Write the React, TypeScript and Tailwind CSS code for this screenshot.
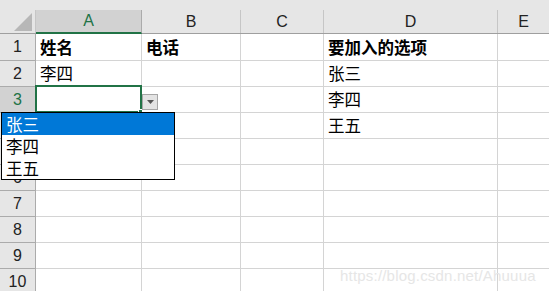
import React from 'react'

// column widths incl. right gridline
const cols = [
  { key: 'A', w: 'w-[106px]' },
  { key: 'B', w: 'w-[99px]' },
  { key: 'C', w: 'w-[83px]' },
  { key: 'D', w: 'w-[174px]' },
  { key: 'E', w: 'flex-1' },
]

const data: Record<number, Record<string, { text: string; bold?: boolean }>> = {
  1: { A: { text: '姓名', bold: true }, B: { text: '电话', bold: true }, D: { text: '要加入的选项', bold: true } },
  2: { A: { text: '李四' }, D: { text: '张三' } },
  3: { D: { text: '李四' } },
  4: { D: { text: '王五' } },
}

const cjk = "font-['Microsoft_YaHei','Noto_Sans_CJK_SC',sans-serif]"

export default function App() {
  const rows = [1, 2, 3, 4, 5, 6, 7, 8, 9, 10]

  return (
    <div className="relative w-[549px] h-[291px] overflow-hidden bg-white">
      {/* ribbon edge */}
      <div className="h-[10px] bg-[#e6e6e6]" />

      {/* column headers */}
      <div className="flex h-[24px] bg-[#e6e6e6] border-b border-[#9f9f9f] font-['Liberation_Sans',sans-serif] text-[16px] text-[#222]">
        <div className="relative w-[36px] border-r border-[#c6c6c6]">
          <svg className="absolute right-[3px] bottom-[2px]" width="18" height="18" viewBox="0 0 18 18">
            <polygon points="18,0 18,18 0,18" fill="#b7b7b7" />
          </svg>
        </div>
        {cols.map(c => (
          <div
            key={c.key}
            className={`${c.w} flex items-center justify-center ${
              c.key === 'A'
                ? 'bg-[#d2d2d2] text-[#217346] border-r border-[#ababab] border-b-2 border-b-[#217346] -mb-px'
                : c.key === 'E'
                  ? ''
                  : 'border-r border-[#c6c6c6]'
            }`}
          >
            {c.key}
          </div>
        ))}
      </div>

      {/* grid rows */}
      {rows.map(r => (
        <div key={r} className={`flex ${r === 1 ? 'h-[27px]' : 'h-[26px]'}`}>
          <div
            className={`w-[36px] flex items-center justify-center border-r border-b font-['Liberation_Sans',sans-serif] text-[16px] ${
              r === 3
                ? 'bg-[#d2d2d2] text-[#217346] border-r-[#217346] border-b-[#ababab]'
                : 'bg-[#e6e6e6] text-[#222] border-[#ababab]'
            }`}
          >
            {r}
          </div>
          {cols.map(c => {
            const cell = data[r]?.[c.key]
            return (
              <div
                key={c.key}
                className={`${c.w} flex items-center pl-[4px] border-b border-[#d4d4d4] ${c.key === 'E' ? '' : 'border-r'} ${cjk} text-[16.5px] text-black ${
                  cell?.bold ? 'font-bold' : ''
                }`}
              >
                {cell?.text}
              </div>
            )
          })}
        </div>
      ))}

      {/* active cell A3 */}
      <div className="absolute left-[35px] top-[85px] w-[107px] h-[28px] border-2 border-[#217346]" />
      <div className="absolute left-[138px] top-[109px] w-[5px] h-[5px] bg-[#217346] border border-white" />

      {/* validation dropdown button */}
      <div className="absolute left-[142px] top-[94px] w-[16px] h-[16px] bg-[#e3e3e3] border border-[#a6a6a6] flex items-center justify-center">
        <svg width="7" height="4" viewBox="0 0 7 4">
          <polygon points="0,0 7,0 3.5,4" fill="#555" />
        </svg>
      </div>

      {/* dropdown list */}
      <div className={`absolute left-[1px] top-[112px] w-[174px] h-[68px] bg-white border border-black ${cjk} text-[16.5px]`}>
        <div className="h-[22px] flex items-center pl-[4px] bg-[#0078d7] text-white">张三</div>
        <div className="h-[22px] flex items-center pl-[4px] text-black">李四</div>
        <div className="h-[22px] flex items-center pl-[4px] text-black">王五</div>
      </div>

      {/* watermark */}
      <div className="absolute left-[340px] top-[265px] font-['Liberation_Sans',sans-serif] text-[15px] text-[#e6e6e6] tracking-[0.2px]">
        https://blog.csdn.net/Ahuuua
      </div>
    </div>
  )
}
